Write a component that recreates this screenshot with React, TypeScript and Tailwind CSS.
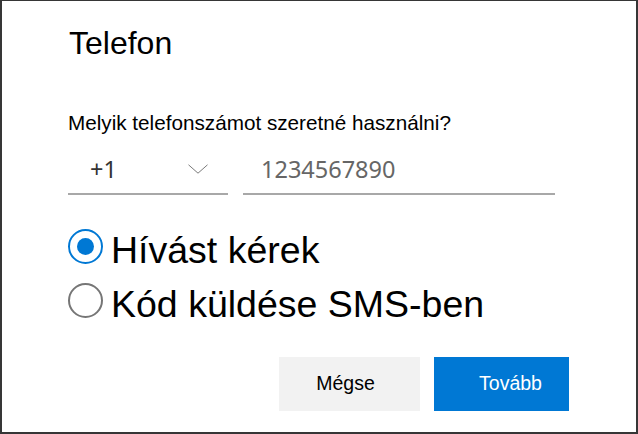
import { useState } from 'react';

type Method = 'call' | 'sms';

interface RadioRowProps {
  label: string;
  checked: boolean;
  onSelect: () => void;
}

function RadioRow({ label, checked, onSelect }: RadioRowProps) {
  return (
    <label
      className="flex items-center gap-[8px] h-[54px] leading-[54px] cursor-pointer"
      onClick={onSelect}
    >
      <span
        className={
          checked
            ? 'mb-[8px] flex items-center justify-center w-[35px] h-[35px] rounded-full border-2 border-[#0078d4]'
            : 'mb-[8px] flex items-center justify-center w-[35px] h-[35px] rounded-full border-2 border-[#767676]'
        }
      >
        {checked && <span className="w-[17px] h-[17px] rounded-full bg-[#0078d4]" />}
      </span>
      <span className="text-[37.5px] text-black">{label}</span>
    </label>
  );
}

export default function App() {
  const [method, setMethod] = useState<Method>('call');

  return (
    <div
      className="w-[638px] h-[434px] bg-white border-[#363636] border-t border-l-2 border-r-2 border-b-2 pl-[66px] pt-[24px] flex flex-col"
      style={{ fontFamily: '"Liberation Sans", Arial, sans-serif' }}
    >
      {/* Header */}
      <h1 className="ml-[1px] text-[32px] leading-[36px] text-black">Telefon</h1>

      <p className="mt-[50px] text-[20.7px] leading-[24px] text-black">
        Melyik telefonszámot szeretné használni?
      </p>

      {/* Country code + number */}
      <div
        className="mt-[19px] flex gap-[15px] text-[23.5px] leading-[30px]"
        style={{ fontFamily: '"Noto Sans", sans-serif' }}
      >
        <div className="w-[160px] flex items-center justify-between pl-[22px] pr-[20px] pb-[9px] border-b-2 border-[#a8a8a8] text-[#333]">
          <span>+1</span>
          <svg width="20" height="10" viewBox="0 0 20 10" fill="none">
            <path d="M0.5 0.8 L10 9.2 L19.5 0.8" stroke="#7a7a7a" strokeWidth="1" />
          </svg>
        </div>
        <div className="w-[312px] pl-[18px] pb-[9px] border-b-2 border-[#a8a8a8] text-[#666]">
          1234567890
        </div>
      </div>

      {/* Delivery method */}
      <div className="mt-[28px] flex flex-col">
        <RadioRow
          label="Hívást kérek"
          checked={method === 'call'}
          onSelect={() => setMethod('call')}
        />
        <RadioRow
          label="Kód küldése SMS-ben"
          checked={method === 'sms'}
          onSelect={() => setMethod('sms')}
        />
      </div>

      {/* Actions */}
      <div className="mt-[26px] flex justify-end gap-[14px] pr-[67px] text-[19.5px]">
        <button className="w-[141px] h-[54px] bg-[#f2f2f2] text-black pr-[8px]">
          Mégse
        </button>
        <button className="w-[135px] h-[54px] bg-[#0078d4] text-white pl-[18px]">
          Tovább
        </button>
      </div>
    </div>
  );
}
